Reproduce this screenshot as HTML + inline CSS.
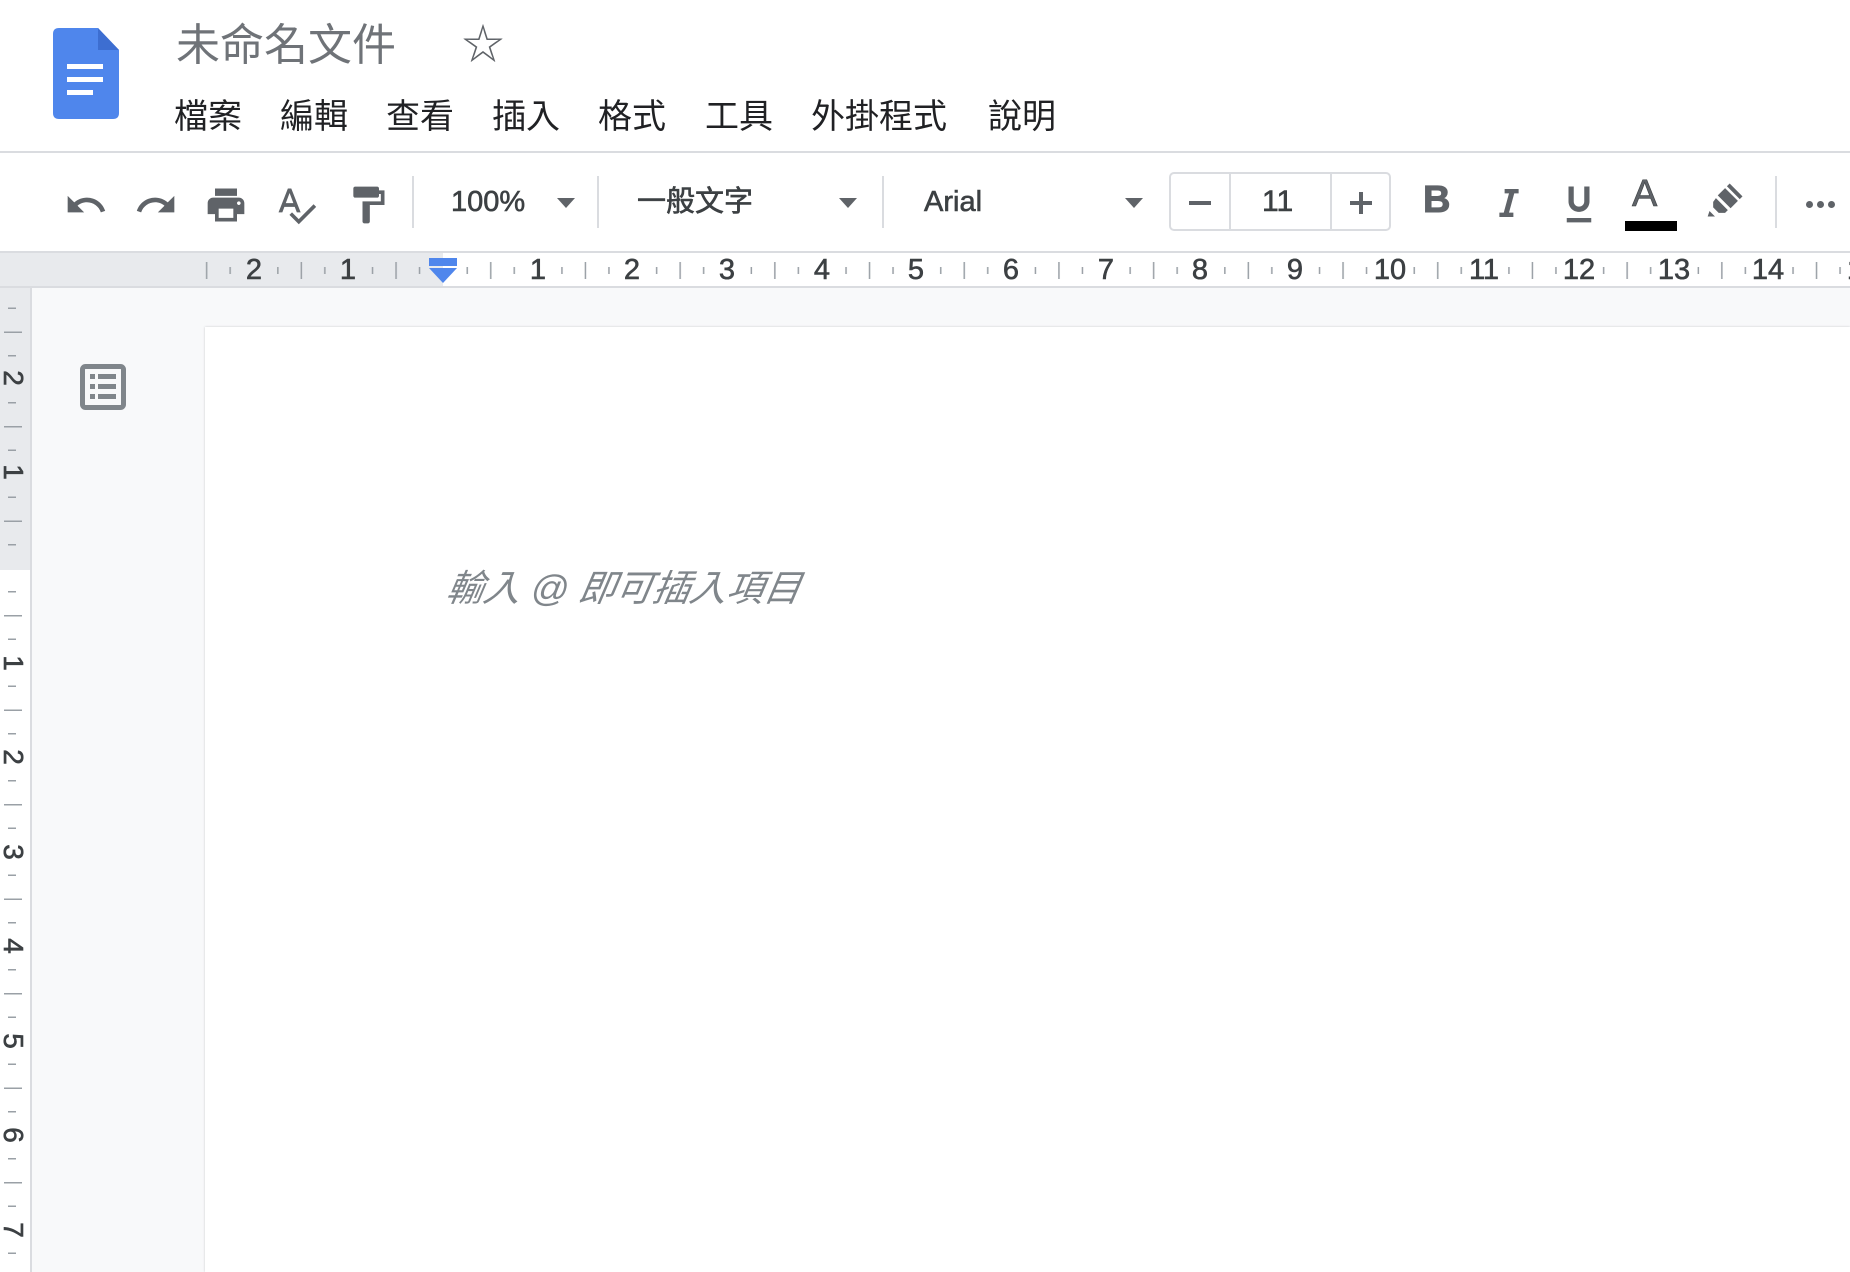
<!DOCTYPE html>
<html style="overflow:hidden;width:1850px;height:1272px"><head><meta charset="utf-8"><style>
*{margin:0;padding:0;box-sizing:border-box}
body{width:1850px;height:1272px;overflow:hidden;background:#f8f9fa;position:relative;font-family:"Liberation Sans","Noto Sans CJK TC",sans-serif;color:#3c4043}
.a{position:absolute}
.menu{position:absolute;top:95px;font-size:34px;color:#202124;white-space:nowrap;line-height:44px}
.tb{position:absolute;top:183px}
.sep{position:absolute;top:176px;width:2px;height:52px;background:#dadce0}
.tt{position:absolute;font-size:29px;color:#3c4043;line-height:40px;top:182px;-webkit-text-stroke:0.6px #3c4043}
.arr{position:absolute;top:198px;width:0;height:0;border-left:9px solid transparent;border-right:9px solid transparent;border-top:10px solid #5f6368}
</style></head><body>
<div class="a" style="left:0;top:0;width:1850px;height:152px;background:#fff"></div>
<div class="a" style="left:0;top:151px;width:1850px;height:2px;background:#dadce0"></div>
<div class="a" style="left:0;top:153px;width:1850px;height:98px;background:#fff"></div>
<svg class="a" style="left:53px;top:28px" width="66" height="91" viewBox="0 0 66 91">
<path d="M6 0H45L66 22V85Q66 91 60 91H6Q0 91 0 85V6Q0 0 6 0Z" fill="#4f86ec"/>
<path d="M45 0V22H66Z" fill="#3d6ed1"/>
<rect x="14" y="36" width="36" height="5" fill="#fff"/><rect x="14" y="49" width="36" height="5" fill="#fff"/><rect x="14" y="62" width="26" height="5" fill="#fff"/>
</svg>
<div class="a" style="left:176px;top:18px;font-size:44px;color:#6f7378;line-height:56px">未命名文件</div>
<div class="a" style="left:462px;top:20px;font-size:42px;color:#5f6368;line-height:50px">☆</div>
<div class="menu" style="left:174px">檔案</div>
<div class="menu" style="left:280px">編輯</div>
<div class="menu" style="left:386px">查看</div>
<div class="menu" style="left:492px">插入</div>
<div class="menu" style="left:598px">格式</div>
<div class="menu" style="left:705px">工具</div>
<div class="menu" style="left:811px">外掛程式</div>
<div class="menu" style="left:988px">說明</div>
<svg class="tb" style="left:64px" width="44" height="44" viewBox="0 0 24 24"><path fill="#5f6368" d="M12.5 8c-2.650 0-5.05.99-6.9 2.6L2 7v9h9l-3.62-3.62c1.39-1.16 3.16-1.88 5.12-1.88 3.54 0 6.55 2.31 7.6 5.5l2.37-.78C21.08 11.03 17.15 8 12.5 8z"/></svg>
<svg class="tb" style="left:134px" width="44" height="44" viewBox="0 0 24 24"><path fill="#5f6368" d="M18.4 10.6C16.55 8.99 14.15 8 11.5 8c-4.65 0-8.58 3.03-9.96 7.22L3.9 16c1.05-3.19 4.05-5.5 7.6-5.5 1.95 0 3.73.72 5.12 1.88L13 16h9V7l-3.6 3.6z"/></svg>
<svg class="tb" style="left:204px" width="44" height="44" viewBox="0 0 24 24"><path fill="#5f6368" d="M19 8H5c-1.66 0-3 1.34-3 3v6h4v4h12v-4h4v-6c0-1.66-1.34-3-3-3zm-3 11H8v-5h8v5zm3-7c-.55 0-1-.45-1-1s.45-1 1-1 1 .45 1 1-.45 1-1 1zm-1-9H6v4h12V3z"/></svg>
<svg class="tb" style="left:274px" width="44" height="44" viewBox="0 0 24 24"><path fill="#5f6368" d="M12.45 16h2.09L9.43 3H7.57L2.46 16h2.09l1.12-3h5.64l1.14 3zm-6.02-5L8.5 5.48 10.57 11H6.43zm15.16.59l-8.09 8.09L9.83 16l-1.41 1.41 5.09 5.09L23 13l-1.41-1.41z"/></svg>
<svg class="tb" style="left:346px" width="44" height="44" viewBox="0 0 24 24"><path fill="#5f6368" d="M18 4V3c0-.55-.45-1-1-1H5c-.55 0-1 .45-1 1v4c0 .55.45 1 1 1h12c.55 0 1-.45 1-1V6h1v4H9v11c0 .55.45 1 1 1h2c.55 0 1-.45 1-1v-9h8V4h-3z"/></svg>
<div class="sep" style="left:412px"></div>
<div class="tt" style="left:451px">100%</div>
<div class="arr" style="left:557px"></div>
<div class="sep" style="left:597px"></div>
<div class="tt" style="left:637px">一般文字</div>
<div class="arr" style="left:839px"></div>
<div class="sep" style="left:882px"></div>
<div class="tt" style="left:924px">Arial</div>
<div class="arr" style="left:1125px"></div>
<div class="a" style="left:1169px;top:172px;width:222px;height:59px;border:2px solid #dadce0;border-radius:5px"></div>
<div class="a" style="left:1229px;top:173px;width:2px;height:57px;background:#dadce0"></div>
<div class="a" style="left:1330px;top:173px;width:2px;height:57px;background:#dadce0"></div>
<div class="a" style="left:1189px;top:201px;width:22px;height:4px;background:#5f6368"></div>
<div class="tt" style="left:1262px;font-size:30px">11</div>
<div class="a" style="left:1350px;top:201px;width:22px;height:4px;background:#5f6368"></div>
<div class="a" style="left:1359px;top:192px;width:4px;height:22px;background:#5f6368"></div>
<div class="tt" style="left:1423px;top:180px;font-weight:bold;font-size:38px;color:#5f6368;-webkit-text-stroke:1px #5f6368">B</div>
<svg class="tb" style="left:1488px;top:181px" width="42" height="44" viewBox="0 0 24 24"><path fill="#5f6368" d="M9.5 4v2.5h2.5l-3 11H6.5V20h8v-2.5H12l3-11h2.5V4z"/></svg>
<svg class="tb" style="left:1558px;top:180px" width="42" height="48" viewBox="0 0 24 26"><path fill="#5f6368" d="M12 17.5c3.4 0 6-2.6 6-6V3h-3v8.5c0 1.7-1.3 3-3 3s-3-1.3-3-3V3H6v8.5c0 3.4 2.6 6 6 6zm-7 3.5v2.5h14V21H5z"/></svg>
<div class="tt" style="left:1632px;top:174px;font-size:38px;color:#5f6368">A</div>
<div class="a" style="left:1625px;top:221px;width:52px;height:10px;background:#000"></div>
<svg class="tb" style="left:1704px;top:178px" width="44" height="44" viewBox="0 0 24 24"><path fill="#5f6368" d="M14 3l7 7-1.5 1.5-7-7zM11.5 5.5l7 7-4 4-7-7zM6.5 11l6.5 6.5-1.5 1.5H8l-3-3V13z M3 18l3 3H2z"/></svg>
<div class="sep" style="left:1775px"></div>
<div class="a" style="left:1806px;top:201px;width:7px;height:7px;border-radius:50%;background:#5f6368;box-shadow:11px 0 #5f6368,22px 0 #5f6368"></div>
<div class="a" style="left:0;top:251px;width:1850px;height:37px;background:#fff;border-top:2px solid #dadce0;border-bottom:2px solid #dadce0"></div>
<div class="a" style="left:0;top:253px;width:443px;height:33px;background:#e8eaed"></div>
<svg class="a" style="left:0;top:253px" width="1850" height="33">
<defs><pattern id="hp" x="443" y="0" width="94.7" height="33" patternUnits="userSpaceOnUse">
<rect x="23.5" y="14" width="1.5" height="7" fill="#9aa0a6"/><rect x="47" y="9" width="1.5" height="17" fill="#9aa0a6"/><rect x="70.5" y="14" width="1.5" height="7" fill="#9aa0a6"/></pattern></defs>
<rect x="200" y="0" width="1650" height="33" fill="url(#hp)"/>
<g font-family="Liberation Sans" font-size="29" fill="#3c4043" stroke="#3c4043" stroke-width="0.6" text-anchor="middle">
<text x="254" y="26">2</text><text x="348" y="26">1</text>
<text x="538" y="26">1</text><text x="632" y="26">2</text><text x="727" y="26">3</text><text x="822" y="26">4</text><text x="916" y="26">5</text><text x="1011" y="26">6</text><text x="1106" y="26">7</text><text x="1200" y="26">8</text><text x="1295" y="26">9</text><text x="1390" y="26">10</text><text x="1484" y="26">11</text><text x="1579" y="26">12</text><text x="1674" y="26">13</text><text x="1768" y="26">14</text><text x="1863" y="26">15</text>
</g>
</svg>
<svg class="a" style="left:428px;top:258px" width="30" height="26" viewBox="0 0 30 26"><rect x="1" y="0" width="28" height="8" fill="#4f86ec"/><path d="M1 10H29L15 25Z" fill="#4f86ec"/></svg>
<div class="a" style="left:0;top:288px;width:32px;height:984px;background:#fff;border-right:2px solid #dadce0"></div>
<div class="a" style="left:0;top:288px;width:30px;height:282px;background:#e8eaed"></div>
<svg class="a" style="left:0;top:288px" width="30" height="984">
<defs><pattern id="vp" x="0" y="280" width="30" height="94.5" patternUnits="userSpaceOnUse">
<rect x="8" y="23" width="8" height="1.5" fill="#9aa0a6"/><rect x="4" y="47" width="18" height="1.5" fill="#9aa0a6"/><rect x="8" y="70.5" width="8" height="1.5" fill="#9aa0a6"/></pattern></defs>
<rect x="0" y="0" width="30" height="984" fill="url(#vp)"/>
<g font-family="Liberation Sans" font-size="28" fill="#3c4043" stroke="#3c4043" stroke-width="0.6" text-anchor="middle">
<text transform="translate(4,90) rotate(90)">2</text>
<text transform="translate(4,184) rotate(90)">1</text>
<text transform="translate(4,375) rotate(90)">1</text>
<text transform="translate(4,469) rotate(90)">2</text>
<text transform="translate(4,564) rotate(90)">3</text>
<text transform="translate(4,658) rotate(90)">4</text>
<text transform="translate(4,753) rotate(90)">5</text>
<text transform="translate(4,847) rotate(90)">6</text>
<text transform="translate(4,942) rotate(90)">7</text>
</g></svg>
<svg class="a" style="left:80px;top:364px" width="46" height="46" viewBox="0 0 46 46">
<rect x="2.5" y="2.5" width="41" height="41" rx="3" fill="none" stroke="#80868b" stroke-width="5"/>
<rect x="10" y="10" width="5" height="5" fill="#80868b"/><rect x="18" y="10" width="18" height="5" fill="#80868b"/>
<rect x="10" y="20" width="5" height="5" fill="#80868b"/><rect x="18" y="20" width="18" height="5" fill="#80868b"/>
<rect x="10" y="30" width="5" height="5" fill="#80868b"/><rect x="18" y="30" width="18" height="5" fill="#80868b"/>
</svg>
<div class="a" style="left:205px;top:327px;width:1645px;height:945px;background:#fff;box-shadow:0 0 2px rgba(60,64,67,.25)"></div>
<div class="a" style="left:447px;top:563px;font-size:37px;font-style:italic;color:#80868b;line-height:52px;white-space:nowrap;transform:skewX(-10deg)">輸入 @ 即可插入項目</div>
</body></html>
